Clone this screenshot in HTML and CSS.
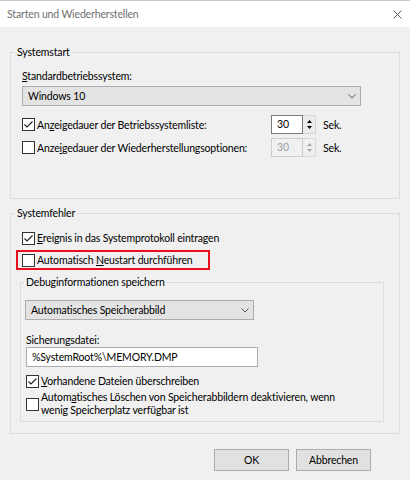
FILE: index.html
```html
<!DOCTYPE html>
<html lang="de">
<head>
<meta charset="utf-8">
<title>Starten und Wiederherstellen</title>
<link rel="stylesheet" href="styles.css">
</head>
<body>
<div class="dialog">
  <div class="titlebar">
    <span class="title">Starten und Wiederherstellen</span>
    <svg class="close" width="9" height="9" viewBox="0 0 9 9"><path d="M0.5 0.5L8.5 8.5M8.5 0.5L0.5 8.5" stroke="#5a5a5a" stroke-width="1" fill="none"/></svg>
  </div>
  <div class="content">
    <section class="group group-start">
      <div class="group-title">Systemstart</div>
      <div class="field-label"><u>S</u>tandardbetriebssystem:</div>
      <div class="select select-os">
        <span>Windows 10</span>
        <svg class="chevron" width="8" height="5" viewBox="0 0 8 5"><path d="M0.5 0.5L4 4L7.5 0.5" stroke="#555" stroke-width="1" fill="none"/></svg>
      </div>
      <div class="spin-row spin-row-first">
        <div class="check check-wide">
          <span class="box"><svg width="11" height="11" viewBox="0 0 11 11"><path d="M1.5 5.5L4 8L9.5 2.5" stroke="#222" stroke-width="1.2" fill="none"/></svg></span>
          <span>An<u>z</u>eigedauer der Betriebssystemliste:</span>
        </div>
        <div class="spinner">
          <span class="spin-value">30</span>
          <span class="spin-buttons">
            <svg width="5" height="3" viewBox="0 0 5 3"><path d="M0 3L2.5 0L5 3Z" fill="#000"/></svg>
            <svg width="5" height="3" viewBox="0 0 5 3"><path d="M0 0L2.5 3L5 0Z" fill="#000"/></svg>
          </span>
        </div>
        <span class="unit">Sek.</span>
      </div>
      <div class="spin-row spin-row-second">
        <div class="check check-wide">
          <span class="box"></span>
          <span>Anze<u>i</u>gedauer der Wiederherstellungsoptionen:</span>
        </div>
        <div class="spinner spinner-disabled">
          <span class="spin-value">30</span>
          <span class="spin-buttons">
            <svg width="5" height="3" viewBox="0 0 5 3"><path d="M0 3L2.5 0L5 3Z" fill="#a8a8a8"/></svg>
            <svg width="5" height="3" viewBox="0 0 5 3"><path d="M0 0L2.5 3L5 0Z" fill="#a8a8a8"/></svg>
          </span>
        </div>
        <span class="unit">Sek.</span>
      </div>
    </section>

    <section class="group group-error">
      <div class="group-title">Systemfehler</div>
      <div class="check row-first">
        <span class="box"><svg width="11" height="11" viewBox="0 0 11 11"><path d="M1.5 5.5L4 8L9.5 2.5" stroke="#222" stroke-width="1.2" fill="none"/></svg></span>
        <span><u>E</u>reignis in das Systemprotokoll eintragen</span>
      </div>
      <div class="highlight">
        <div class="check">
          <span class="box"></span>
          <span>Automatisch <u>N</u>eustart durchführen</span>
        </div>
      </div>
      <section class="group group-debug">
        <div class="group-title title-debug">Debuginformationen speichern</div>
        <div class="select select-dump">
          <span>Automatisches Speicherabbild</span>
          <svg class="chevron" width="8" height="5" viewBox="0 0 8 5"><path d="M0.5 0.5L4 4L7.5 0.5" stroke="#555" stroke-width="1" fill="none"/></svg>
        </div>
        <div class="field-label label-dump">Sicherungsdatei:</div>
        <div class="textbox">%SystemRoot%\MEMORY.DMP</div>
        <div class="check row-overwrite">
          <span class="box"><svg width="11" height="11" viewBox="0 0 11 11"><path d="M1.5 5.5L4 8L9.5 2.5" stroke="#222" stroke-width="1.2" fill="none"/></svg></span>
          <span><u>V</u>orhandene Dateien überschreiben</span>
        </div>
        <div class="check check-multi">
          <span class="box"></span>
          <span class="multi-text">Autom<u>a</u>tisches Löschen von Speicherabbildern deaktivieren, wenn<br>wenig Speicherplatz verfügbar ist</span>
        </div>
      </section>
    </section>

    <div class="buttons">
      <div class="btn">OK</div>
      <div class="btn">Abbrechen</div>
    </div>
  </div>
</div>
</body>
</html>
```

FILE: styles.css
```css
* {
  box-sizing: border-box;
}

html,
body {
  margin: 0;
  padding: 0;
}

body {
  width: 410px;
  height: 480px;
  overflow: hidden;
  background: #f0f0f0;
  font-family: Lato, "Liberation Sans", sans-serif;
  font-size: 10.5px;
  letter-spacing: -0.15px;
  color: #000;
}

.dialog {
  width: 410px;
  height: 480px;
  background: #f0f0f0;
}

.titlebar {
  height: 27px;
  background: #fff;
  border-top: 1px solid #cacaca;
  display: flex;
  align-items: center;
  justify-content: space-between;
  padding: 0 8px 0 7px;
}

.title {
  color: #6e6e6e;
  line-height: 14px;
}

.close {
  display: block;
}

.content {
  padding: 0 10px;
}

.group {
  border: 1px solid #dcdcdc;
}

.group-title {
  display: table;
  line-height: 14px;
  margin: -8px 0 0 -7px;
  padding: 0 2px;
  background: #f0f0f0;
}

.group-start {
  margin-top: 25px;
  padding: 0 15px 41px 11px;
}

.field-label {
  line-height: 14px;
  margin-top: 10px;
}

.select {
  height: 20px;
  margin-top: 3px;
  border: 1px solid #adadad;
  background: #e3e3e3;
  display: flex;
  align-items: center;
  justify-content: space-between;
  padding: 0 4px 0 5px;
}

.chevron {
  display: block;
}

.select-os {
  width: 339px;
}

.spin-row {
  display: flex;
  align-items: center;
  height: 19px;
}

.spin-row-first {
  margin-top: 9px;
}

.spin-row-second {
  margin-top: 4px;
}

.check {
  display: flex;
  align-items: center;
  gap: 2px;
  line-height: 14px;
}

.check-wide {
  width: 249px;
}

.box {
  width: 13px;
  height: 13px;
  flex: none;
  border: 1px solid #333;
  background: #fff;
  display: flex;
}

.box svg {
  display: block;
}

.spinner {
  display: flex;
  width: 45px;
  height: 19px;
}

.spin-value {
  width: 32px;
  border: 1px solid #7a7a7a;
  background: #fff;
  padding-left: 5px;
  line-height: 17px;
}

.spin-buttons {
  width: 13px;
  display: flex;
  flex-direction: column;
  justify-content: space-around;
  align-items: center;
  background: #ececec;
  border: 1px solid #d4d4d4;
  border-left: none;
  padding: 2px 0;
}

.spin-buttons svg {
  display: block;
}

.spinner-disabled .spin-value {
  border-color: #cccccc;
  background: #f0f0f0;
  color: #a0a0a0;
}

.spinner-disabled .spin-buttons {
  background: #f0f0f0;
  border-color: #dadada;
}

.unit {
  margin-left: 7px;
}

.group-error {
  margin-top: 14px;
  padding: 0 15px 11px 11px;
}

.row-first {
  margin-top: 11px;
}

.highlight {
  width: 194px;
  margin: 5px 0 0 -6px;
  border: 2px solid #e5121b;
  padding: 1px 0 1px 4px;
}

.group-debug {
  margin: 12px 0 0 -2px;
  padding: 0 0 4px 5px;
}

.title-debug {
  margin-left: -2px;
}

.select-dump {
  width: 229px;
  margin: 11px 0 0 -1px;
}

.label-dump {
  margin-top: 13px;
}

.textbox {
  width: 232px;
  height: 20px;
  border: 1px solid #acacac;
  background: #fff;
  padding-left: 5px;
  line-height: 18px;
}

.row-overwrite {
  margin-top: 7px;
}

.check-multi {
  margin-top: 3px;
}

.multi-text {
  line-height: 13px;
}

.buttons {
  display: flex;
  justify-content: flex-end;
  gap: 7px;
  margin-top: 15px;
  padding-right: 29px;
}

.btn {
  width: 75px;
  height: 22px;
  border: 1px solid #adadad;
  background: #e1e1e1;
  display: flex;
  align-items: center;
  justify-content: center;
}
```
